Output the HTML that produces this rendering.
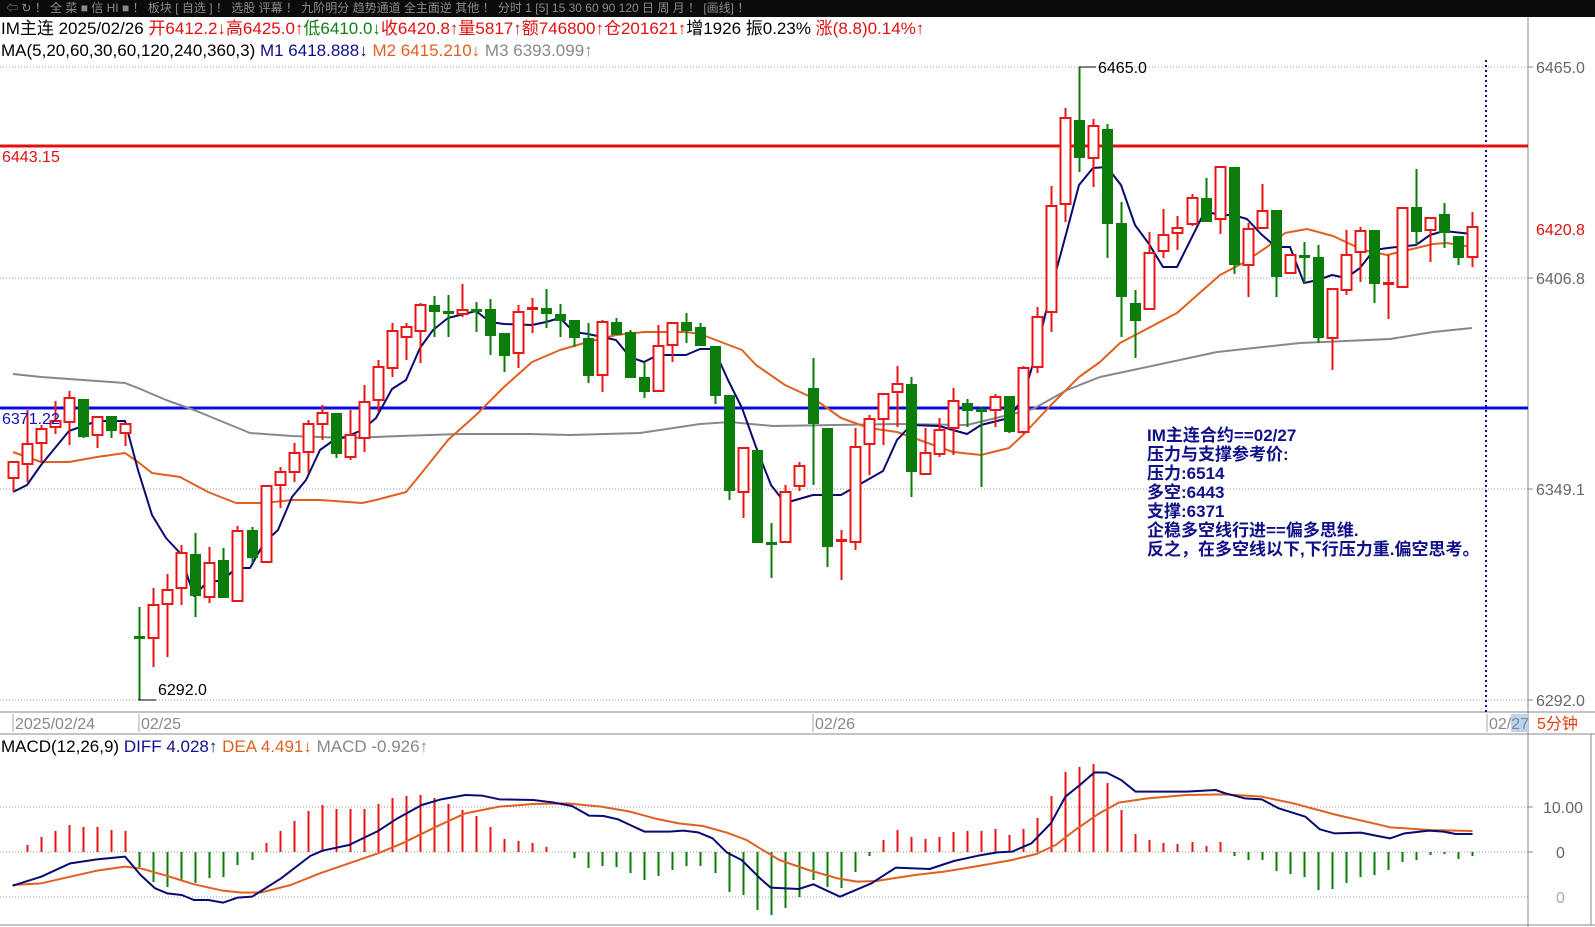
<!DOCTYPE html>
<html><head><meta charset="utf-8">
<style>
html,body{margin:0;padding:0;background:#fff;width:1595px;height:927px;overflow:hidden;}
svg{display:block;}
text{font-family:"Liberation Sans","Noto Sans CJK SC",sans-serif;}
</style></head><body>
<svg id="s" width="1595" height="927" viewBox="0 0 1595 927" xmlns="http://www.w3.org/2000/svg">
<rect x="0" y="0" width="1595" height="17" fill="#0b0b0b"/>
<text x="6" y="12" font-size="12" fill="#8a8a8a">⇦ ↻ ！ 全 菜  ■ 信 HI ■ ！  板块 [ 自选 ] ！ 选股  评幕 ！ 九阶明分 趋势通道 全主面逆 其他    ！ 分时  1  [5] 15 30 60 90 120 日 周 月 ！ [画线] ！</text>
<g stroke="#999" stroke-width="1" stroke-dasharray="1,2">
<line x1="0" y1="67" x2="1528" y2="67"/><line x1="0" y1="278" x2="1528" y2="278"/>
<line x1="0" y1="489" x2="1528" y2="489"/><line x1="0" y1="700" x2="1528" y2="700"/>
<line x1="0" y1="807" x2="1528" y2="807"/><line x1="0" y1="852" x2="1528" y2="852"/>
<line x1="0" y1="897" x2="1528" y2="897"/>
</g>
<line x1="1528" y1="17" x2="1528" y2="927" stroke="#888"/>
<line x1="0" y1="712" x2="1595" y2="712" stroke="#888"/>
<line x1="0" y1="734" x2="1595" y2="734" stroke="#888"/>
<line x1="1591" y1="734" x2="1591" y2="925" stroke="#888"/>
<line x1="0" y1="925" x2="1595" y2="925" stroke="#888"/>
<line x1="1486" y1="60" x2="1486" y2="712" stroke="#1010a0" stroke-width="2" stroke-dasharray="2,3"/>
<line x1="0" y1="146" x2="1528" y2="146" stroke="#e01010" stroke-width="3"/>
<line x1="0" y1="408" x2="1528" y2="408" stroke="#0a0ae0" stroke-width="3"/>
<g id="ma"></g>
<g id="cd"></g>
<g id="mc"></g>
<text x="2" y="162" font-size="16" fill="#e01010">6443.15</text>
<text x="2" y="424" font-size="16" fill="#1010c0">6371.22</text>
<line x1="1079" y1="67" x2="1096" y2="67" stroke="#000"/>
<text x="1098" y="73" font-size="16" fill="#000">6465.0</text>
<line x1="138" y1="700" x2="156" y2="700" stroke="#000"/>
<text x="158" y="695" font-size="16" fill="#000">6292.0</text>
<g font-size="17" fill="#10108a" font-weight="bold">
<text x="1147" y="441">IM主连合约==02/27</text>
<text x="1147" y="460">压力与支撑参考价:</text>
<text x="1147" y="479">压力:6514</text>
<text x="1147" y="498">多空:6443</text>
<text x="1147" y="517">支撑:6371</text>
<text x="1147" y="536">企稳多空线行进==偏多思维.</text>
<text x="1147" y="555">反之，在多空线以下,下行压力重.偏空思考。</text>
</g>
<text x="1" y="34" font-size="17"><tspan fill="#000">IM主连 2025/02/26 </tspan><tspan fill="#e01010">开6412.2↓高6425.0↑</tspan><tspan fill="#108010">低6410.0↓</tspan><tspan fill="#e01010">收6420.8↑量5817↑额746800↑仓201621↑</tspan><tspan fill="#000">增1926 振0.23% </tspan><tspan fill="#e01010">涨(8.8)0.14%↑</tspan></text>
<text x="1" y="56" font-size="17"><tspan fill="#000">MA(5,20,60,30,60,120,240,360,3)  </tspan><tspan fill="#10108a"> M1 6418.888↓ </tspan><tspan fill="#e06020"> M2 6415.210↓ </tspan><tspan fill="#888"> M3 6393.099↑</tspan></text>
<g font-size="16" fill="#666">
<text x="1536" y="73">6465.0</text>
<text x="1536" y="235" fill="#e01010">6420.8</text>
<text x="1536" y="284">6406.8</text>
<text x="1536" y="495">6349.1</text>
<text x="1536" y="706">6292.0</text>
<text x="1543" y="813">10.00</text>
<text x="1556" y="858">0</text>
<text x="1556" y="903" fill="#aaa">0</text>
</g>
<g stroke="#888"><line x1="1528" y1="67" x2="1533" y2="67"/><line x1="1528" y1="278" x2="1533" y2="278"/><line x1="1528" y1="489" x2="1533" y2="489"/><line x1="1528" y1="700" x2="1533" y2="700"/><line x1="1528" y1="807" x2="1533" y2="807"/><line x1="1528" y1="852" x2="1533" y2="852"/></g>
<g font-size="16" fill="#888">
<line x1="13" y1="714" x2="13" y2="732" stroke="#aaa"/><text x="15" y="729">2025/02/24</text>
<line x1="139" y1="714" x2="139" y2="732" stroke="#aaa"/><text x="141" y="729">02/25</text>
<line x1="813" y1="714" x2="813" y2="732" stroke="#aaa"/><text x="815" y="729">02/26</text>
<rect x="1511" y="714" width="17" height="18" fill="#b8d4f0"/>
<line x1="1487" y1="714" x2="1487" y2="732" stroke="#aaa"/><text x="1489" y="729">02/27</text>
<text x="1537" y="729" fill="#e04010">5分钟</text>
</g>
<text x="1" y="752" font-size="17"><tspan fill="#000">MACD(12,26,9)  </tspan><tspan fill="#10108a">DIFF 4.028↑ </tspan><tspan fill="#e06020">DEA 4.491↓ </tspan><tspan fill="#888">MACD -0.926↑</tspan></text>
</svg>
<script>
var NS="http://www.w3.org/2000/svg";
function el(p,t,a){var e=document.createElementNS(NS,t);for(var k in a)e.setAttribute(k,a[k]);p.appendChild(e);return e;}
function X(i){return 13+i*14.03;}
var C=[[462,478,462,492,1],[444,464,410,482,1],[429,443,425,462,1],[421,427,401,434,1],[398,422,391,445,1],[399,437,399,438,0],[417,435,417,448,1],[416,431,416,438,0],[424,433,424,446,1],[637,637,607,700,0],[605,638,588,667,1],[590,604,574,657,1],[553,588,545,605,1],[554,596,533,617,0],[563,597,547,603,1],[560,598,548,598,0],[531,601,526,601,1],[530,558,527,563,0],[486,562,486,562,1],[472,485,467,508,1],[453,472,443,482,1],[424,452,420,473,1],[413,424,405,440,1],[413,454,413,458,0],[435,457,410,460,1],[402,438,385,452,1],[367,400,360,412,1],[331,368,323,377,1],[327,337,323,360,1],[305,331,303,363,1],[305,312,296,337,0],[312,312,295,337,0],[310,314,284,317,1],[310,310,302,332,0],[309,336,299,355,0],[333,356,333,372,0],[312,353,305,368,1],[308,308,298,333,1],[308,314,289,328,0],[314,321,304,337,0],[320,338,320,347,0],[338,376,323,383,0],[322,375,320,392,1],[322,335,318,335,0],[332,378,330,378,0],[377,392,362,398,0],[346,391,325,391,1],[323,345,322,362,1],[322,331,313,343,0],[327,346,323,346,0],[346,396,346,404,0],[395,491,395,500,0],[448,492,448,518,1],[450,543,450,543,0],[543,543,523,578,0],[492,542,485,542,1],[466,486,462,491,1],[388,424,358,485,0],[428,547,428,567,0],[540,540,530,580,1],[447,542,428,550,1],[419,444,415,475,1],[394,419,394,445,1],[384,392,366,427,1],[384,472,377,497,0],[453,474,428,474,1],[430,454,418,457,1],[401,428,388,455,1],[403,411,399,427,0],[410,410,407,487,0],[397,410,394,427,1],[396,432,396,433,0],[368,432,366,434,1],[317,367,307,373,1],[206,312,186,332,1],[118,204,108,222,1],[120,158,67,172,0],[126,158,119,187,1],[129,224,124,258,0],[223,297,202,337,0],[303,321,290,358,0],[253,309,232,309,1],[235,251,209,258,1],[228,233,216,250,1],[198,224,194,226,1],[198,222,178,222,0],[167,219,166,234,1],[167,265,167,274,0],[229,265,223,297,1],[211,228,184,228,1],[210,277,210,297,0],[255,273,255,273,1],[255,258,242,283,0],[257,338,245,343,0],[289,338,289,370,1],[255,290,230,295,1],[231,252,227,282,1],[230,284,230,303,0],[283,283,255,319,1],[208,287,208,287,1],[207,232,169,245,0],[218,230,218,262,1],[214,233,203,248,0],[236,258,236,265,0],[227,257,212,267,1]];
var cd=document.getElementById("cd");
C.forEach(function(c,i){var x=Math.round(X(i));var col=c[4]?"#e81818":"#0a7d0a";
el(cd,"line",{x1:x+0.5,y1:c[2],x2:x+0.5,y2:c[3],stroke:col,"stroke-width":2});
if(c[1]-c[0]<2){el(cd,"rect",{x:x-5,y:c[0]-1,width:11,height:3,fill:col});}
else if(c[4]){el(cd,"rect",{x:x-4.5,y:c[0],width:10,height:c[1]-c[0],fill:"#fff",stroke:col,"stroke-width":2});}
else{el(cd,"rect",{x:x-5,y:c[0],width:11,height:c[1]-c[0],fill:col});}
});
var ma=document.getElementById("ma");
function pl(g,pts,col,w){el(g,"polyline",{points:pts.map(function(p){return p[0]+","+p[1]}).join(" "),fill:"none",stroke:col,"stroke-width":w,"stroke-linejoin":"round"});}
pl(ma,[[13,374],[41,377],[69,379],[125,383],[138,388],[166,400],[194,410],[250,433],[292,436],[348,438],[400,436],[460,434],[530,434],[570,435],[640,433],[700,424],[730,422],[773,426],[900,424],[967,425],[1000,417],[1033,409],[1067,390],[1100,377],[1133,370],[1217,352],[1300,343],[1390,339],[1433,332],[1472,328]],"#888",2);
pl(ma,[[13,452],[41,462],[69,462],[97,457],[125,453],[138,462],[152,473],[180,477],[208,492],[236,503],[264,503],[292,500],[320,500],[362,503],[376,500],[406,492],[420,475],[448,440],[476,415],[504,387],[532,362],[560,350],[588,342],[616,335],[644,332],[686,332],[700,334],[742,350],[756,365],[785,385],[813,398],[841,418],[869,428],[897,432],[925,442],[953,452],[981,455],[1009,448],[1023,435],[1051,405],[1079,377],[1100,362],[1120,343],[1177,313],[1220,275],[1243,263],[1267,247],[1285,233],[1307,229],[1333,236],[1363,250],[1387,255],[1400,252],[1433,244],[1447,243],[1472,247]],"#e06020",2);
pl(ma,[[13,492],[27,485],[41,465],[69,431],[97,421],[125,421],[138,470],[152,515],[166,538],[180,553],[194,596],[208,581],[222,581],[236,568],[250,568],[264,543],[278,530],[292,497],[306,480],[320,450],[334,440],[348,436],[362,430],[376,418],[392,389],[406,380],[420,348],[433,330],[448,318],[476,311],[490,322],[504,324],[532,325],[546,322],[560,318],[574,332],[588,334],[616,340],[630,357],[644,362],[658,355],[686,355],[700,349],[714,349],[728,380],[742,408],[756,447],[771,485],[785,503],[813,495],[841,495],[855,487],[883,471],[897,440],[911,425],[939,426],[967,434],[981,425],[1009,418],[1023,398],[1037,350],[1051,290],[1065,238],[1079,185],[1093,168],[1107,167],[1121,185],[1135,225],[1149,244],[1163,267],[1177,267],[1205,211],[1219,215],[1233,215],[1247,219],[1261,234],[1276,247],[1290,247],[1304,283],[1318,280],[1332,275],[1346,278],[1360,268],[1374,250],[1388,248],[1416,245],[1430,235],[1444,231],[1472,234]],"#0a0a70",2);
var H=[852,845,837,831,825,827,827,830,831,867,882,887,880,883,878,877,865,860,843,831,821,811,805,809,809,809,804,798,796,795,798,804,810,816,827,839,841,843,847,852,858,868,866,867,873,880,876,870,866,866,873,892,895,910,915,908,897,880,887,888,872,856,840,830,837,839,837,832,831,831,829,835,829,818,796,772,767,764,783,810,834,840,843,844,842,846,842,856,860,860,871,874,877,890,889,883,877,875,870,862,860,855,854,859,856];
var mc=document.getElementById("mc");
H.forEach(function(y,i){var x=Math.round(X(i))+0.5;if(Math.abs(y-852)<1)return;el(mc,"line",{x1:x,y1:852,x2:x,y2:y,stroke:y<852?"#e81818":"#0a7d0a","stroke-width":2});});
function cv(a,off){return a.map(function(p){return [off+p[0]/2.063,700+p[1]/3];});}
var dif=cv([[26,557],[85,530],[145,490],[200,478],[258,470],[290,525],[320,565],[345,580],[375,585],[400,600],[430,600],[460,608],[490,593],[520,590],[580,535],[640,468],[665,452],[720,435],[780,393],[820,355],[870,315],[910,298],[960,285],[995,287],[1030,298],[1100,300],[1140,307],[1180,318],[1215,347],[1245,348],[1275,358],[1300,375],[1330,395],[1380,395],[1410,392],[1440,397],[1470,415],[1500,458],[1530,480],[1568,535]],0).concat(cv([[22,563],[80,567],[110,553],[165,590],[230,550],[280,503],[350,507],[400,483],[450,467],[490,457],[520,455],[560,430],[600,370],[630,290],[660,255],[690,217],[715,218],[745,240],[775,275],[880,275],[940,270],[960,280],[1000,295],[1035,298],[1070,325],[1125,350],[1155,388],[1185,400],[1240,398],[1270,407],[1300,415],[1330,400],[1380,392],[1410,395],[1435,402],[1470,402]],760));
var dea=cv([[26,555],[85,550],[145,530],[200,512],[258,500],[290,505],[350,530],[400,553],[460,572],[500,578],[540,577],[600,555],[660,520],[720,490],[780,460],[830,430],[900,380],[960,340],[1030,320],[1100,312],[1170,310],[1240,320],[1300,335],[1350,355],[1400,370],[1450,378],[1500,398],[1540,420]],0).concat(cv([[0,445],[40,480],[100,510],[160,535],[200,545],[240,543],[320,525],[380,515],[450,498],[520,480],[570,462],[610,435],[650,390],[700,340],[740,308],[800,295],[880,285],[960,283],[1035,290],[1100,310],[1190,345],[1260,368],[1300,382],[1380,390],[1470,393]],760));
pl(mc,dea,"#e06020",2);
pl(mc,dif,"#0a0a70",2);
</script>
</body></html>
